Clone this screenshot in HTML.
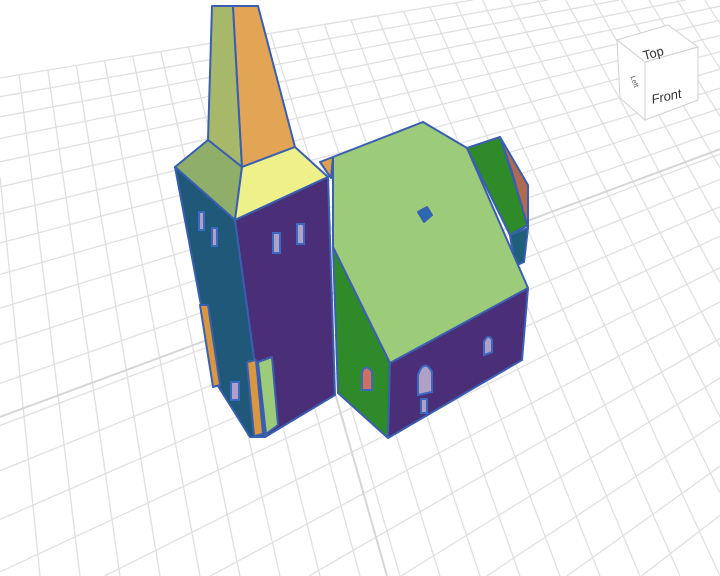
<!DOCTYPE html>
<html><head><meta charset="utf-8"><style>
html,body{margin:0;padding:0;background:#fff;width:720px;height:576px;overflow:hidden}
svg{display:block;overflow:hidden}
text{font-family:"Liberation Sans",sans-serif}
</style></head><body>
<svg id="s" width="720" height="576" viewBox="0 0 720 576">
<g id="grid" stroke="#e0e0e0" stroke-width="1.3" fill="none"></g>
<g stroke="#3a5fb0" stroke-width="2" stroke-linejoin="round">
<polygon points="467,148 500,137 528,225 510,235" fill="#2f8a2a"/>
<polygon points="500,137 528,185 528,228 512,172" fill="#b06a50"/>
<polygon points="510,235 528,228 524,262 515,266" fill="#1f5f7a"/>
<polygon points="320,162 333,157 331,178" fill="#e0a050"/>
<polygon points="333,247 390,363 388,438 338,393" fill="#2f8a2a"/>
<polygon points="390,363 528,288 522,360 388,438" fill="#4a2f78"/>
<polygon points="333,157 423,122 467,148 528,288 390,363 333,247" fill="#9ccc7a"/>
<polygon points="212,6 233,6 242,167 208,140" fill="#a8b86a"/>
<polygon points="233,6 258,6 295,147 242,167" fill="#e2a455"/>
<polygon points="175,167 208,140 242,167 235,220" fill="#8fae6a"/>
<polygon points="242,167 295,147 328,177 235,220" fill="#eef08a"/>
<polygon points="175,167 235,220 265,437 250,437 218,386 200,300" fill="#1f5878"/>
<polygon points="235,220 328,177 335,395 265,437" fill="#4a2f78"/>
<polygon points="200,305 208,305 220,385 213,387" fill="#d9973f"/>
<polygon points="247,362 256,360 263,434 254,436" fill="#d9973f"/>
<polygon points="258,362 272,357 278,425 266,434" fill="#9ccc7a"/>
<polygon points="418,212 427,207 432,215 424,222" fill="#2a6ab0"/>
</g>
<g fill="#b0a0c8" stroke="#3a6ac0" stroke-width="2">
<rect x="273" y="233" width="7" height="20"/><rect x="297" y="224" width="7" height="20"/>
<rect x="199" y="212" width="5" height="18"/><rect x="212" y="228" width="5" height="18"/>
<path d="M418 395 L418 375 Q424 358 432 372 L432 392 Z"/>
<rect x="421" y="399" width="6" height="14"/>
<path d="M484 355 L484 342 Q488 333 492 340 L492 352 Z"/>
<path d="M362 390 L362 372 Q366 363 372 372 L372 390 Z" fill="#d07060"/>
<rect x="231" y="382" width="8" height="18"/>
</g>
<g stroke="#d0d0d0" stroke-width="1" fill="#fff">
<polygon points="617,40 668,25 698,47 645,62"/>
<polygon points="645,62 698,47 698,100 645,120"/>
<polygon points="617,40 645,62 645,120 620,98"/>
</g>
<text x="642" y="57" font-size="13" fill="#333" transform="rotate(-15 655 50)">Top</text>
<text x="651" y="100" font-size="13" fill="#333" font-style="italic" transform="rotate(-12 670 95)">Front</text>
<text x="624" y="78" font-size="7" fill="#555" transform="rotate(70 628 82)">Left</text>
</svg>
<script>
(function(){
var g=document.getElementById('grid'),ns='http://www.w3.org/2000/svg';
function clip(x1,y1,x2,y2){var t0=0,t1=1,dx=x2-x1,dy=y2-y1,p=[-dx,dx,-dy,dy],q=[x1,720-x1,y1,576-y1];
 for(var i=0;i<4;i++){if(p[i]==0){if(q[i]<0)return null;}else{var r=q[i]/p[i];if(p[i]<0){if(r>t1)return null;if(r>t0)t0=r;}else{if(r<t0)return null;if(r<t1)t1=r;}}}
 return [x1+t0*dx,y1+t0*dy,x1+t1*dx,y1+t1*dy];}
function L(x1,y1,x2,y2,c,w){var k=clip(x1,y1,x2,y2);if(!k)return;var l=document.createElementNS(ns,'line');l.setAttribute('x1',k[0]);l.setAttribute('y1',k[1]);l.setAttribute('x2',k[2]);l.setAttribute('y2',k[3]);if(c){l.setAttribute('stroke',c);l.setAttribute('stroke-width',w);}g.appendChild(l);}
function sl(y0){return -0.165-(y0-78)*(0.285/467);}
var bx=-149,by=-1310;
var y=78;
while(y<1100){var s=sl(y);L(0,y,720,y+s*720,null);y+=1.7*(11+(y-78)*(21/467));}
for(var xb=-1000;xb<2000;xb+=40){
 var dx=bx-xb,dy=by-576,m=-0.165;var s=(78+m*xb-576)/(dy-m*dx);
 if(s<0)continue;L(xb,576,xb+dx*s,576+dy*s,null);}
L(0,417,720,417+sl(417)*720,'#d6d6d6',2);
(function(){var xb=387,dx=bx-xb,dy=by-576,m=-0.165,s=(78+m*xb-576)/(dy-m*dx);L(xb,576,xb+dx*s,576+dy*s,'#d6d6d6',2);})();
})();
</script>
</body></html>
